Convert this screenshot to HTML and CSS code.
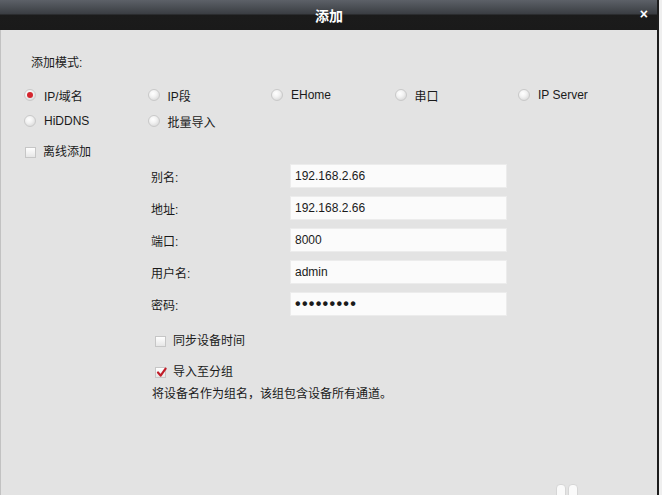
FILE: index.html
```html
<!DOCTYPE html>
<html lang="zh">
<head>
<meta charset="utf-8">
<title>添加</title>
<link rel="stylesheet" href="styles.css">
</head>
<body>
<div class="screen">
  <div class="dialog">
    <div class="titlebar">
      <span class="title">添加</span>
      <span class="close">×</span>
    </div>
    <div class="content">
      <div class="mode-label">添加模式:</div>
      <div class="radio-grid">
        <label class="opt"><span class="radio on"></span><span>IP/域名</span></label>
        <label class="opt"><span class="radio"></span><span>IP段</span></label>
        <label class="opt"><span class="radio"></span><span>EHome</span></label>
        <label class="opt"><span class="radio"></span><span>串口</span></label>
        <label class="opt"><span class="radio"></span><span>IP Server</span></label>
        <label class="opt"><span class="radio"></span><span>HiDDNS</span></label>
        <label class="opt"><span class="radio"></span><span>批量导入</span></label>
      </div>
      <label class="check offline"><span class="box"></span><span>离线添加</span></label>
      <div class="form">
        <div class="row"><span class="lbl">别名:</span><span class="input">192.168.2.66</span></div>
        <div class="row"><span class="lbl">地址:</span><span class="input">192.168.2.66</span></div>
        <div class="row"><span class="lbl">端口:</span><span class="input">8000</span></div>
        <div class="row"><span class="lbl">用户名:</span><span class="input">admin</span></div>
        <div class="row"><span class="lbl">密码:</span><span class="input pwd">•••••••••</span></div>
      </div>
      <div class="options">
        <label class="check sync"><span class="box"></span><span>同步设备时间</span></label>
        <label class="check group"><span class="box"><svg viewBox="0 0 11 11" width="11" height="11"><path d="M2 5.5 L4.6 8.6 L9.6 1.6" fill="none" stroke="#c01c28" stroke-width="2.2" stroke-linecap="round" stroke-linejoin="round"/></svg></span><span>导入至分组</span></label>
        <div class="desc">将设备名作为组名，该组包含设备所有通道。</div>
      </div>
    </div>
    <div class="peek"><span></span><span></span></div>
  </div>
  <div class="edge"></div>
</div>
</body>
</html>
```
FILE: styles.css
```css
html, body {
  margin: 0;
  padding: 0;
  width: 662px;
  height: 495px;
  overflow: hidden;
  font-family: "Liberation Sans", Arial, "Noto Sans CJK SC", sans-serif;
  font-size: 12px;
  color: #1a1a1a;
}
.screen {
  display: flex;
  width: 662px;
  height: 495px;
}
.dialog {
  position: relative;
  width: 657px;
  height: 495px;
  background: #e3e3e3;
  display: flex;
  flex-direction: column;
}
.edge {
  width: 3px;
  flex: none;
  border-left: 2px solid #1d1d1d;
  background: #efefef;
}
.titlebar {
  height: 30px;
  flex: none;
  display: flex;
  align-items: center;
  justify-content: center;
  position: relative;
  background: linear-gradient(to bottom, #5d6168 0px, #3a3d42 14px, #1b1b1b 15px, #1a1a1a 30px);
}
.title {
  color: #fff;
  font-weight: bold;
  font-size: 14px;
  margin-left: 1px;
}
.close {
  position: absolute;
  right: 9px;
  top: 6px;
  color: #fff;
  font-weight: bold;
  font-size: 14px;
  line-height: 16px;
}
.content {
  flex: 1;
  border-left: 1px solid #c2c2c2;
  padding-left: 23px;
  display: flex;
  flex-direction: column;
}
.mode-label {
  margin-top: 26px;
  margin-left: 7px;
  line-height: 14px;
}
.radio-grid {
  margin-top: 12px;
  display: grid;
  grid-template-columns: repeat(5, 123.5px);
  grid-auto-rows: 26px;
}
.opt {
  display: flex;
  align-items: center;
  gap: 8px;
}
.radio {
  width: 10px;
  height: 10px;
  border-radius: 50%;
  border: 1px solid #c9c9c9;
  background: radial-gradient(circle at 40% 35%, #ffffff 0%, #f2f2f2 40%, #cfcfcf 100%);
  box-sizing: content-box;
  flex: none;
  position: relative;
}
.radio.on::after {
  content: "";
  position: absolute;
  left: 2px;
  top: 2px;
  width: 6px;
  height: 6px;
  border-radius: 50%;
  background: #d4252e;
}
.check {
  display: flex;
  align-items: center;
  gap: 7px;
  line-height: 14px;
}
.box {
  width: 9px;
  height: 9px;
  border: 1px solid #c6c6c6;
  background: linear-gradient(to bottom, #ffffff, #e6e6e6);
  flex: none;
  position: relative;
}
.box svg {
  position: absolute;
  left: 0;
  top: -1px;
}
.offline {
  margin-top: 11px;
  margin-left: 1px;
}
.form {
  margin-top: 6px;
  margin-left: 127px;
  display: flex;
  flex-direction: column;
  gap: 10px;
}
.row {
  display: flex;
  align-items: center;
  height: 22px;
}
.lbl {
  width: 139px;
  flex: none;
}
.input {
  width: 211px;
  height: 22px;
  line-height: 22px;
  padding-left: 4px;
  background: #fbfbfb;
  border: 1px solid #ececec;
  box-sizing: content-box;
  margin-top: -1px;
}
.pwd {
  font-size: 16px;
  letter-spacing: 1.3px;
  font-weight: bold;
}
.options {
  margin-left: 128px;
  display: flex;
  flex-direction: column;
}
.sync {
  margin-top: 19px;
  margin-left: 3px;
}
.group {
  margin-top: 17px;
  margin-left: 3px;
}
.desc {
  margin-top: 8px;
  line-height: 14px;
}
.peek {
  position: absolute;
  left: 556px;
  top: 484px;
  display: flex;
  gap: 2px;
}
.peek span {
  width: 8px;
  height: 12px;
  border-radius: 4px 4px 0 0;
  background: #fafafa;
  border: 1px solid #d6d6d6;
}
```
